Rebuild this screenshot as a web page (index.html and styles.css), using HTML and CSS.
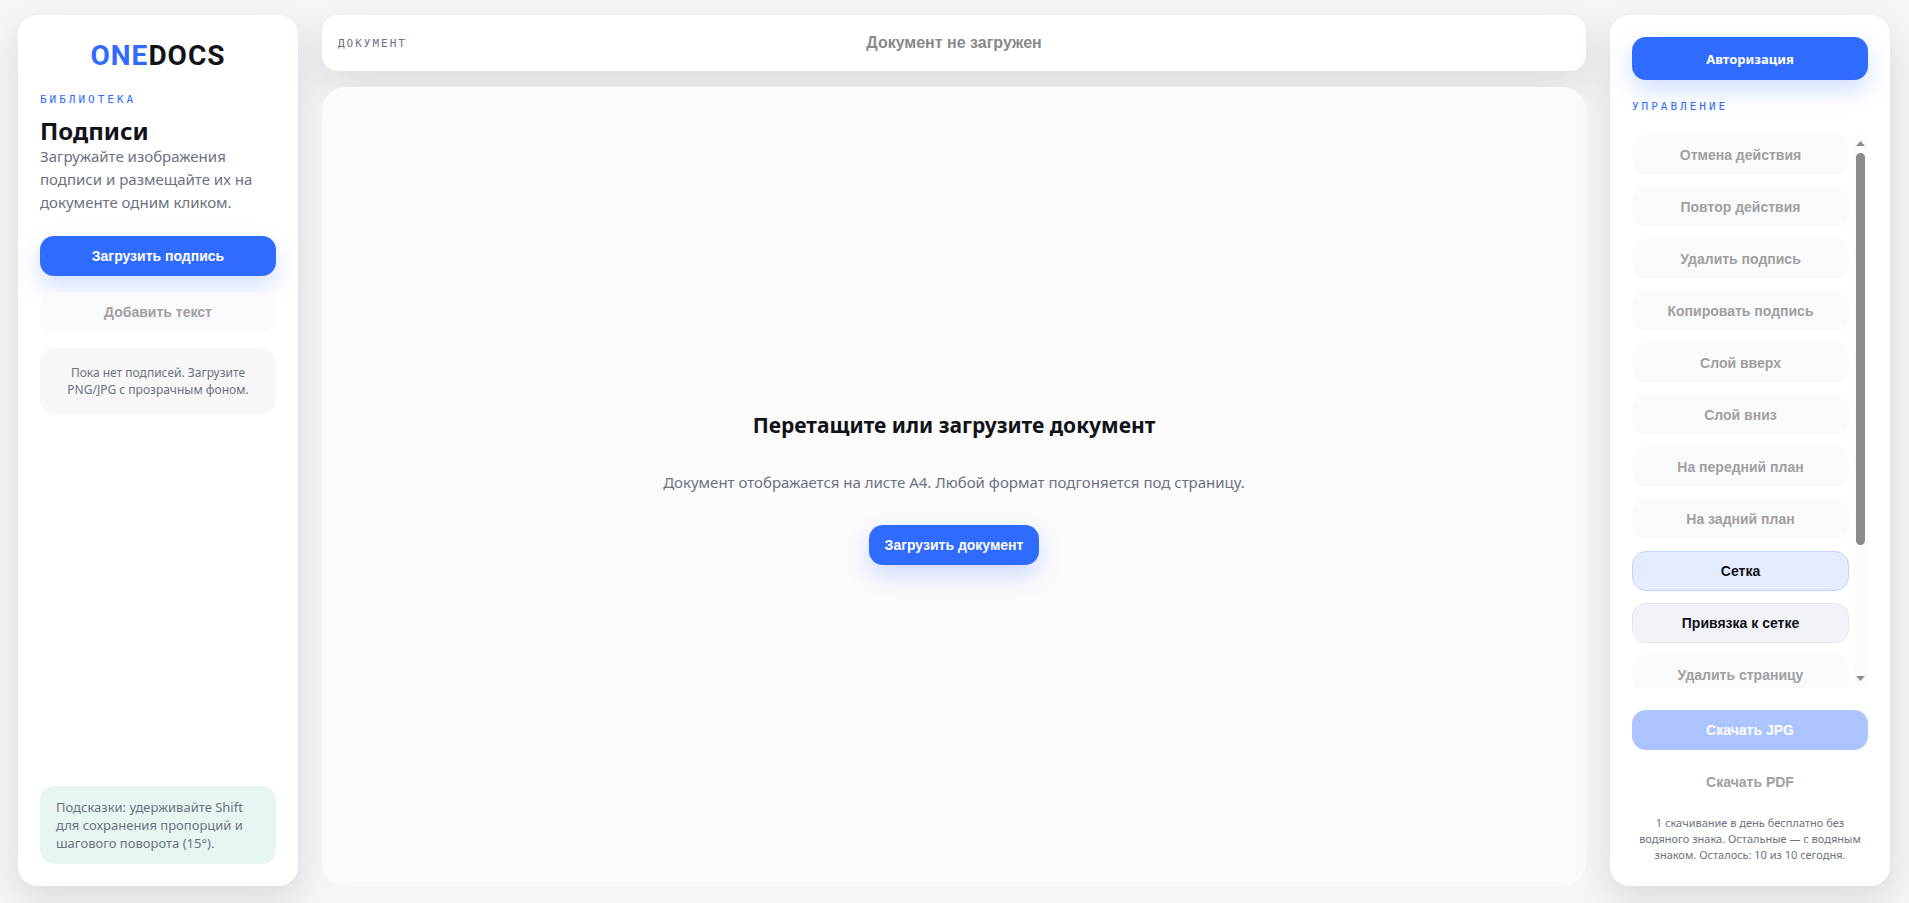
FILE: index.html
```html
<!DOCTYPE html>
<html lang="ru">
<head>
  <meta charset="UTF-8" />
  <meta name="viewport" content="width=device-width, initial-scale=1.0">
  <title>ONEDOCS</title>
  <link rel="stylesheet" href="styles.css">
</head>
<body>
  <div class="app">
    <aside class="panel">
      <div class="logo"><span>ONE</span>DOCS</div>
      <div class="eyebrow">БИБЛИОТЕКА</div>
      <h1>Подписи</h1>
      <p class="lead">Загружайте изображения подписи и размещайте их на документе одним кликом.</p>
      <div class="library-actions">
        <button class="btn primary">Загрузить подпись</button>
        <button class="btn" disabled>Добавить текст</button>
      </div>
      <div class="empty">Пока нет подписей. Загрузите PNG/JPG с прозрачным фоном.</div>
      <div class="hint">Подсказки: удерживайте Shift для сохранения пропорций и шагового поворота (15°).</div>
    </aside>

    <main class="workspace">
      <header class="topbar">
        <span class="topbar-label">ДОКУМЕНТ</span>
        <span class="topbar-title">Документ не загружен</span>
      </header>
      <section class="canvas">
        <h2>Перетащите или загрузите документ</h2>
        <p>Документ отображается на листе A4. Любой формат подгоняется под страницу.</p>
        <button class="btn primary">Загрузить документ</button>
      </section>
    </main>

    <aside class="panel">
      <button class="btn primary auth">Авторизация</button>
      <div class="eyebrow controls-title">УПРАВЛЕНИЕ</div>
      <div class="controls">
        <div class="controls-list">
          <button class="btn" disabled>Отмена действия</button>
          <button class="btn" disabled>Повтор действия</button>
          <button class="btn" disabled>Удалить подпись</button>
          <button class="btn" disabled>Копировать подпись</button>
          <button class="btn" disabled>Слой вверх</button>
          <button class="btn" disabled>Слой вниз</button>
          <button class="btn" disabled>На передний план</button>
          <button class="btn" disabled>На задний план</button>
          <button class="btn active">Сетка</button>
          <button class="btn">Привязка к сетке</button>
          <button class="btn" disabled>Удалить страницу</button>
        </div>
        <div class="scrollbar" aria-hidden="true">
          <svg width="9" height="5" viewBox="0 0 9 5"><path d="M0 5L4.500 0L9 5Z" /></svg>
          <div class="scroll-track"><div class="scroll-thumb"></div></div>
          <svg width="9" height="5" viewBox="0 0 9 5"><path d="M0 0L4.500 5L9 0Z" /></svg>
        </div>
      </div>
      <div class="downloads">
        <button class="btn primary" disabled>Скачать JPG</button>
        <button class="btn ghost" disabled>Скачать PDF</button>
        <p class="note">1 скачивание в день бесплатно без водяного знака. Остальные — с водяным знаком. Осталось: 10 из 10 сегодня.</p>
      </div>
    </aside>
  </div>
</body>
</html>
```
FILE: styles.css
```css
* {
  box-sizing: border-box;
}
body {
  margin: 0;
  font-family: "Noto Sans", sans-serif;
  color: #111318;
  background: #f5f6f8;
}
h1, h2, p {
  margin: 0;
}
.app {
  display: grid;
  grid-template-columns: 280px 1fr 280px;
  gap: 24px;
  height: 100vh;
  padding: 15px 19px 17px 18px;
}
.panel {
  display: flex;
  flex-direction: column;
  min-height: 0;
  padding: 22px;
  background: #fff;
  border-radius: 20px;
  box-shadow: 0 14px 40px rgba(17, 19, 24, 0.12);
}
.logo {
  font-family: Roboto, sans-serif;
  font-size: 28px;
  font-weight: 700;
  line-height: 38px;
  letter-spacing: 1px;
  text-align: center;
}
.logo span {
  color: #2f6bff;
}
.eyebrow {
  margin-top: 17px;
  font-family: "DejaVu Sans Mono", monospace;
  font-size: 11px;
  line-height: 16px;
  letter-spacing: 3px;
  color: #2f6bff;
}
h1 {
  margin-top: 7px;
  font-size: 24px;
  line-height: 32px;
}
.lead {
  margin-top: -2px;
  font-size: 15px;
  line-height: 23px;
  color: #6b7280;
}

/* buttons */
.btn {
  flex: none;
  height: 40px;
  padding: 0 16px;
  border: 1px solid #e4e6ec;
  border-radius: 14px;
  background: #f1f3f8;
  color: #111318;
  font-family: "Liberation Sans", Arial, sans-serif;
  font-size: 14px;
  font-weight: 700;
  cursor: pointer;
}
.btn:disabled {
  border-color: transparent;
  background: #f9fafc;
  color: #a0a0a1;
  cursor: default;
}
.btn.primary {
  border: none;
  background: #2f6bff;
  color: #fff;
  box-shadow: 0 10px 24px rgba(47, 107, 255, 0.22);
}
.btn.primary:disabled {
  background: #acc4ff;
  box-shadow: none;
}
.btn.active {
  border-color: #c1d2ff;
  background: #e5ecff;
}
.btn.ghost {
  background: transparent;
}
.btn.auth {
  height: 43px;
  font-family: "Noto Sans", sans-serif;
  font-size: 13px;
}

.library-actions {
  display: flex;
  flex-direction: column;
  gap: 16px;
  margin-top: 22px;
}
.empty {
  margin-top: 16px;
  padding: 16px;
  border-radius: 14px;
  background: #f7f7f7;
  color: #6b7280;
  font-size: 12px;
  line-height: 17px;
  text-align: center;
}
.hint {
  margin-top: auto;
  padding: 12px 16px;
  border-radius: 14px;
  background: #e7f6f1;
  color: #6b7280;
  font-size: 13px;
  line-height: 18px;
}

/* workspace */
.workspace {
  display: flex;
  flex-direction: column;
  gap: 16px;
  min-width: 0;
}
.topbar {
  display: grid;
  grid-template-columns: 1fr auto 1fr;
  align-items: center;
  height: 56px;
  padding: 0 16px;
  border-radius: 16px;
  background: #fff;
  box-shadow: 0 14px 40px rgba(17, 19, 24, 0.12);
}
.topbar-label {
  font-family: "DejaVu Sans Mono", monospace;
  font-size: 11px;
  letter-spacing: 2px;
  color: #6b7280;
}
.topbar-title {
  font-family: "Liberation Sans", Arial, sans-serif;
  font-size: 16px;
  font-weight: 700;
  color: #88898b;
}
.canvas {
  display: flex;
  flex: 1;
  flex-direction: column;
  align-items: center;
  justify-content: center;
  border-radius: 24px;
  background: #fbfbfc;
}
.canvas h2 {
  font-size: 21px;
  line-height: 35px;
}
.canvas p {
  margin: 27px 0 31px;
  font-size: 15px;
  line-height: 24px;
  color: #6b7280;
}

/* right panel */
.controls-title {
  margin: 19px 0 20px;
}
.controls {
  display: flex;
  flex: 1;
  gap: 4px;
  min-height: 0;
  overflow: hidden;
}
.controls-list {
  display: flex;
  flex: 1;
  flex-direction: column;
  gap: 12px;
}
.scrollbar {
  display: flex;
  flex-direction: column;
  align-items: center;
  width: 15px;
  padding: 6px 0 7px;
  background: #fcfcfc;
}
.scrollbar svg {
  flex: none;
  fill: #8b8b8b;
}
.scroll-track {
  flex: 1;
  width: 9px;
  padding: 7px 0;
}
.scroll-thumb {
  height: 76%;
  border-radius: 5px;
  background: #8b8b8b;
}
.downloads {
  display: flex;
  flex-direction: column;
  gap: 12px;
  margin-top: 22px;
}
.note {
  padding: 1px 0;
  font-size: 11px;
  line-height: 16px;
  text-align: center;
  color: #6b7280;
}
```
